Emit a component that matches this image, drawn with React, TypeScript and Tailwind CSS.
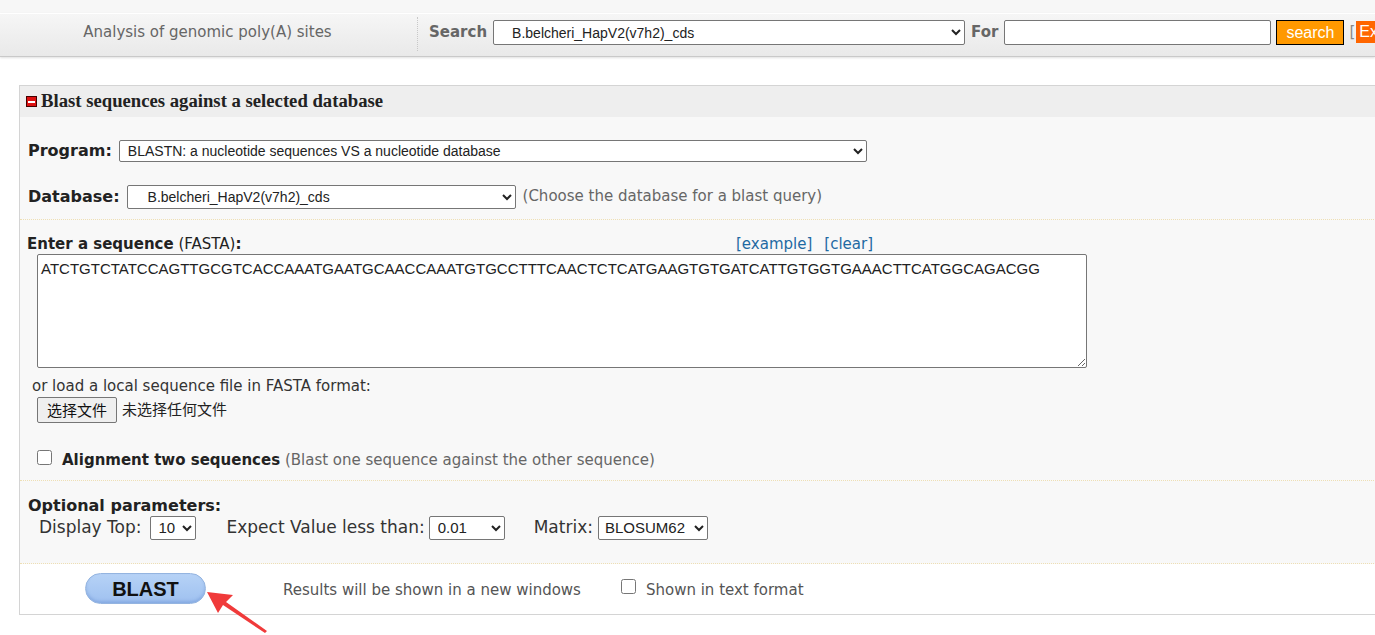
import React from 'react';

const seq =
  'ATCTGTCTATCCAGTTGCGTCACCAAATGAATGCAACCAAATGTGCCTTTCAACTCTCATGAAGTGTGATCATTGTGGTGAAACTTCATGGCAGACGG';

function Sep() {
  return <div className="border-t border-dotted border-[#eedfb4] w-full" />;
}

export default function App() {
  return (
    <div
      className="relative w-[1375px] h-[635px] overflow-hidden bg-white text-[#333]"
      style={{ fontFamily: '"DejaVu Sans", Verdana, sans-serif' }}
    >
      {/* top bar */}
      <div className="h-[13px] bg-[#f7f7f7]" />
      <div className="h-[44px] flex items-start pt-[6px] bg-gradient-to-b from-[#f6f6f6] to-[#e9e9e9] border-t border-white border-b border-b-[#c9c9c9] shadow-[0_1px_2px_rgba(0,0,0,0.12)] whitespace-nowrap">
        <div className="w-[417px] shrink-0 text-center text-[15px] leading-[25px] text-[#666] pr-[2px]">
          Analysis of genomic poly(A) sites
        </div>
        <div className="shrink-0 h-[34px] -mt-[3px] border-l border-dotted border-[#c8c8c8]" />
        <span className="shrink-0 ml-[11px] text-[15px] leading-[25px] font-bold text-[#666]">Search</span>
        <select
          className="shrink-0 ml-[6px] w-[472px] h-[25px] bg-white border border-[#767676] rounded-[2px] text-[14px] text-[#222] pl-[14px]"
          style={{ fontFamily: '"Liberation Sans", Arial, sans-serif' }}
          defaultValue="a"
        >
          <option value="a">B.belcheri_HapV2(v7h2)_cds</option>
        </select>
        <span className="shrink-0 ml-[6px] text-[15px] leading-[25px] font-bold text-[#666]">For</span>
        <input className="shrink-0 ml-[6px] w-[267px] h-[25px] bg-white border border-[#767676] rounded-[2px]" />
        <button
          className="shrink-0 ml-[5px] w-[68px] h-[25px] bg-[#ff9900] border border-black text-white text-[16px] leading-none"
          style={{ fontFamily: '"Liberation Sans", Arial, sans-serif' }}
        >
          search
        </button>
        <span className="shrink-0 ml-[5px] text-[15px] leading-[25px] text-[#888]">[</span>
        <span
          className="shrink-0 ml-[1px] mt-[1px] bg-[#ff6600] text-white text-[16px] pl-[3px] pr-[2px] leading-[22px]"
          style={{ fontFamily: '"Liberation Sans", Arial, sans-serif' }}
        >
          Ex
        </span>
      </div>

      {/* panel */}
      <div className="mt-[28px] ml-[19px] w-[1400px] border border-[#d4d4d4]">
        <div className="h-[31px] bg-[#eeeeee] flex items-center pl-[6px]">
          <span className="w-[11px] h-[11px] bg-[#d11] border border-[#400] flex items-center justify-center">
            <span className="w-[7px] h-[2px] bg-white" />
          </span>
          <span
            className="ml-[4px] text-[18.7px] font-bold text-[#222]"
            style={{ fontFamily: '"Liberation Serif", "Times New Roman", serif' }}
          >
            Blast sequences against a selected database
          </span>
        </div>

        <div className="bg-[#f8f8f8] text-[15px]">
          <div className="pt-[23px] pb-[11px] pl-[8px]">
            <div className="flex items-center h-[22px]">
              <span className="font-bold text-[16px] text-[#222]">Program:</span>
              <select
                className="ml-[7px] w-[748px] h-[22px] bg-white border border-[#767676] rounded-[2px] text-[14px] text-[#222] pl-[4px]"
                style={{ fontFamily: '"Liberation Sans", Arial, sans-serif' }}
                defaultValue="n"
              >
                <option value="n">BLASTN: a nucleotide sequences VS a nucleotide database</option>
              </select>
            </div>
            <div className="flex items-center h-[23px] mt-[23px]">
              <span className="font-bold text-[16px] text-[#222]">Database:</span>
              <select
                className="ml-[7px] w-[389px] h-[24px] bg-white border border-[#767676] rounded-[2px] text-[14px] text-[#222] pl-[16px]"
                style={{ fontFamily: '"Liberation Sans", Arial, sans-serif' }}
                defaultValue="a"
              >
                <option value="a">B.belcheri_HapV2(v7h2)_cds</option>
              </select>
              <span className="ml-[7px] text-[#666]">(Choose the database for a blast query)</span>
            </div>
          </div>
          <Sep />

          <div className="pl-[7px] pt-[15px] pb-[9px]">
            <div className="flex items-end h-[20px]">
              <span className="w-[709px] text-[#222]">
                <b>Enter a sequence</b> (FASTA)<b>:</b>
              </span>
              <span className="text-[#1f6aa3]">[example]</span>
              <span className="ml-[12px] text-[#1f6aa3]">[clear]</span>
            </div>
            <textarea
              className="block ml-[10px] mt-[-1px] w-[1050px] h-[114px] bg-white border border-[#767676] rounded-[2px] px-[3px] py-[3px] text-[15px] text-[#222] resize"
              style={{ fontFamily: '"Liberation Sans", Arial, sans-serif' }}
              defaultValue={seq}
            />
            <div className="ml-[5px] mt-[7px] text-[#333]">or load a local sequence file in FASTA format:</div>
            <div className="flex items-center ml-[10px] -mt-[1px]">
              <button
                className="h-[26px] px-[9px] bg-[#efefef] border border-[#767676] rounded-[2px] text-[15px] leading-none text-[#111]"
                style={{ fontFamily: '"Noto Sans CJK SC", sans-serif' }}
              >
                选择文件
              </button>
              <span
                className="ml-[5px] text-[15px] text-[#222]"
                style={{ fontFamily: '"Noto Sans CJK SC", sans-serif' }}
              >
                未选择任何文件
              </span>
            </div>
            <div className="flex items-center ml-[10px] mt-[26px]">
              <input type="checkbox" className="w-[15px] h-[15px] m-0 -mt-[4px]" />
              <span className="ml-[10px] text-[#222]">
                <b>Alignment two sequences</b> <span className="text-[#666]">(Blast one sequence against the other sequence)</span>
              </span>
            </div>
          </div>
          <Sep />

          <div className="pl-[8px] pt-[15px] pb-[22px]">
            <div className="font-bold text-[16px] text-[#222] leading-[20px]">Optional parameters:</div>
            <div className="flex items-center -mt-[1px] ml-[11px] text-[17px] text-[#333]">
              <span>Display Top:</span>
              <select
                className="ml-[9px] w-[46px] h-[24px] bg-white border border-[#767676] rounded-[2px] text-[15px] text-[#222] pl-[3px]"
                style={{ fontFamily: '"Liberation Sans", Arial, sans-serif' }}
                defaultValue="10"
              >
                <option value="10">10</option>
              </select>
              <span className="ml-[30px]">Expect Value less than:</span>
              <select
                className="ml-[4px] w-[76px] h-[24px] bg-white border border-[#767676] rounded-[2px] text-[15px] text-[#222] pl-[4px]"
                style={{ fontFamily: '"Liberation Sans", Arial, sans-serif' }}
                defaultValue="0.01"
              >
                <option value="0.01">0.01</option>
              </select>
              <span className="ml-[29px]">Matrix:</span>
              <select
                className="ml-[5px] w-[110px] h-[24px] bg-white border border-[#767676] rounded-[2px] text-[15px] text-[#222] pl-[2px]"
                style={{ fontFamily: '"Liberation Sans", Arial, sans-serif' }}
                defaultValue="B"
              >
                <option value="B">BLOSUM62</option>
              </select>
            </div>
          </div>
          <Sep />
        </div>

        <div className="bg-white h-[50px] flex items-center">
          <button
            className="ml-[65px] w-[121px] h-[31px] rounded-full border border-[#94b4e0] bg-gradient-to-b from-[#b6d2f6] to-[#9fc1f0] shadow-[inset_0_-2px_3px_rgba(90,130,200,0.35)] text-[20px] font-bold text-[#111]"
            style={{ fontFamily: '"Liberation Sans", Arial, sans-serif' }}
          >
            BLAST
          </button>
          <span className="ml-[77px] pt-[4px] text-[15px] text-[#555]">Results will be shown in a new windows</span>
          <input type="checkbox" className="ml-[40px] w-[15px] h-[15px] m-0 -mt-[5px]" />
          <span className="ml-[10px] pt-[4px] text-[15px] text-[#555]">Shown in text format</span>
        </div>
      </div>

      {/* red arrow */}
      <svg className="absolute left-[200px] top-[585px]" width="75" height="50" viewBox="0 0 75 50">
        <polygon points="7,7 33,10 26,17 67,46 65,48 23,20 18,28" fill="#f03a3a" />
      </svg>
    </div>
  );
}
